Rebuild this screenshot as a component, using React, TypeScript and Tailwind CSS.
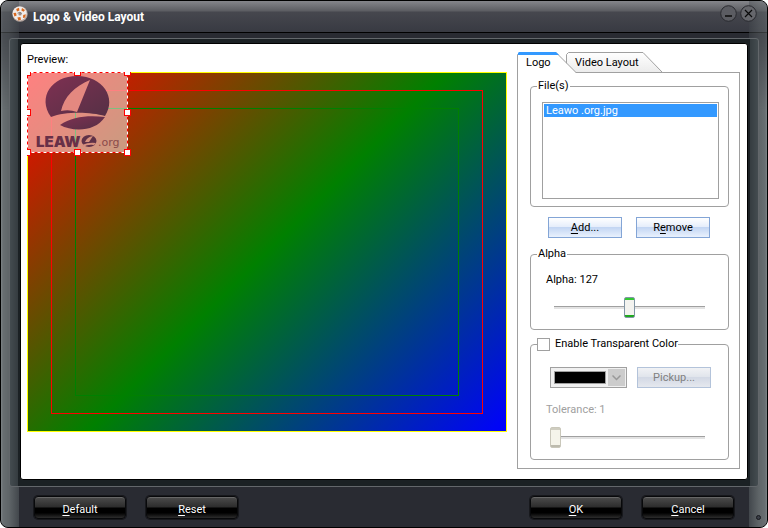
import React from "react";

type GroupProps = {
    legend: React.ReactNode;
    className?: string;
    bodyClassName?: string;
    children: React.ReactNode;
};

const Group = ({
    legend,
    className = "",
    bodyClassName = "",
    children,
}: GroupProps) => (
    <fieldset
        className={`min-w-0 rounded-[4px] border border-[#a0a0a0] ${className}`}
    >
        <legend className="ml-1.5 flex h-4 items-center gap-[5px] leading-[18px]">
            {legend}
        </legend>
        <div className={bodyClassName}>{children}</div>
    </fieldset>
);

type ButtonProps = {
    hotkey: string;
    before?: string;
    after: string;
};

const Label = ({ hotkey, before, after }: ButtonProps) => (
    <span>
        {before}
        <span className="underline underline-offset-2">{hotkey}</span>
        {after}
    </span>
);

const DarkButton = (props: ButtonProps) => (
    <button
        type="button"
        className="h-[23px] w-[92px] rounded-[4px] border border-[#08090b] bg-[linear-gradient(#4c4c4c,#2c2c2c_48%,#000_52%,#000_75%,#2c2c2c)] pt-1 leading-4 text-white shadow-[0_0_0_1px_#17181c,inset_0_1px_0_#666]"
    >
        <Label {...props} />
    </button>
);

const BlueButton = (props: ButtonProps) => (
    <button
        type="button"
        className="h-[21px] w-[74px] border border-[#83a5d6] bg-[linear-gradient(#fff,#e6eefb_45%,#c3d6f3_50%,#e9f1fd)] pt-px leading-4"
    >
        <Label {...props} />
    </button>
);

const AppIcon = () => (
    <svg viewBox="0 0 16 16" className="size-4">
        <circle cx="8" cy="8" r="7.7" fill="#b9a9a2" />
        <circle cx="7.6" cy="7.4" r="7" fill="#f1ece9" />
        <g fill="#d9691e">
            <path d="M4.2 3L7 1.8L7.4 4.4L5 5.6Z" />
            <path d="M10 2L13 4L11.6 5.8L9.4 4.6Z" />
            <path d="M1.4 7L4 6.8L4.6 9.6L2.4 10.6Z" />
            <path d="M5.4 11.6L8.4 11L9 13.8L6.4 14.4Z" />
            <path d="M11.2 9L13.8 8.2L13.2 11.4L11 12Z" />
        </g>
        <circle cx="8" cy="8" r="1.6" fill="#9d8d87" />
        <path d="M5.5 7.2L8 6.2L10 7.6" fill="none" stroke="#6b5f5a" strokeWidth="0.7" />
    </svg>
);

const WatermarkArt = () => (
    <svg viewBox="0 0 100 80" className="absolute inset-0 h-20 w-[100px]">
        <defs>
            <linearGradient id="ink" x1="0" y1="0" x2="1" y2="1">
                <stop offset="0" stopColor="#7f3052" />
                <stop offset="1" stopColor="#553045" />
            </linearGradient>
        </defs>
        <path
            d="M24 45C10 25 25 4 50 4C76 4 90 26 78 44C64 40 39 39 24 45Z"
            fill="url(#ink)"
        />
        <path d="M63 8C48 14 37 25 34 39Q42 37 50 40Z" fill="#e48880" />
        <path d="M33 53C45 44 63 43 78 45C68 60 46 60 33 53Z" fill="url(#ink)" />
        <ellipse cx="62" cy="69" rx="7.5" ry="6" fill="#5f3147" />
        <path
            d="M66 64Q60 65 58 70L62 70ZM55 73Q62 70 69 71L67 73Q61 72 56 75Z"
            fill="#d58f7e"
        />
        <text
            x="9"
            y="75"
            fill="#683048"
            className="font-['Inter',sans-serif] text-[15px] font-black"
        >
            LEAW
        </text>
        <text
            x="71"
            y="74"
            fill="#8a4a4a"
            className="font-['DejaVu_Sans',sans-serif] text-[11px]"
        >
            .org
        </text>
    </svg>
);

const handles = [
    "-left-[3px] -top-[3px]",
    "left-[47px] -top-[3px]",
    "-right-[3px] -top-[3px]",
    "-left-[3px] top-[37px]",
    "-right-[3px] top-[37px]",
    "-left-[3px] -bottom-[3px]",
    "left-[47px] -bottom-[3px]",
    "-right-[3px] -bottom-[3px]",
];

const Preview = () => (
    <div className="relative aspect-[4/3] w-full overflow-hidden bg-[linear-gradient(135deg,#f00,#008000_50%,#00f)]">
        <div className="absolute inset-0 border border-[#ff0]" />
        <div className="absolute inset-[5%] border border-[#f00]" />
        <div className="absolute inset-[10%] border border-[#008000]" />
        <div className="absolute left-0 top-0 h-[81px] w-[101px] bg-white/50">
            <WatermarkArt />
            <svg className="absolute inset-0 size-full">
                <rect x="0.5" y="0.5" width="100" height="80" fill="none" stroke="#fff" />
                <rect
                    x="0.5"
                    y="0.5"
                    width="100"
                    height="80"
                    fill="none"
                    stroke="#f00"
                    strokeDasharray="3 3"
                />
            </svg>
            {handles.map((place) => (
                <span
                    key={place}
                    className={`absolute size-[7px] border border-[#f00] bg-white ${place}`}
                />
            ))}
        </div>
    </div>
);

const Tabs = () => (
    <div role="tablist" className="relative z-10 -mb-px flex h-[21px]">
        <button
            type="button"
            role="tab"
            aria-selected="true"
            className="relative z-10 w-[49px] pl-[9px] text-left leading-4"
        >
            <svg className="absolute left-0 top-0 h-[21px] w-[60px]">
                <path d="M0.5 21V2.5L2.5 0.5H39L59 21Z" fill="#fff" />
                <path d="M0.5 21V2.5L2.5 0.5H39L59 20.5" fill="none" stroke="#a0a0a0" />
                <path d="M1 3V1L2 0H39L42 3Z" fill="#39f" />
            </svg>
            <span className="relative">Logo</span>
        </button>
        <button
            type="button"
            role="tab"
            aria-selected="false"
            className="relative w-[97px] pl-[9px] text-left leading-4"
        >
            <svg className="absolute left-0 top-0 h-[21px] w-[97px]">
                <defs>
                    <linearGradient id="tab" x1="0" y1="0" x2="0" y2="1">
                        <stop offset="0" stopColor="#fff" />
                        <stop offset="1" stopColor="#ebebeb" />
                    </linearGradient>
                </defs>
                <path
                    d="M0.5 21V2.5L2.5 0.5H77L96.5 20.5H0"
                    fill="url(#tab)"
                    stroke="#a0a0a0"
                />
            </svg>
            <span className="relative">Video Layout</span>
        </button>
    </div>
);

const slider =
    "block h-[21px] w-full appearance-none bg-transparent [&::-webkit-slider-runnable-track]:h-[3px] [&::-webkit-slider-runnable-track]:border-t [&::-webkit-slider-runnable-track]:border-[#a0a0a0] [&::-webkit-slider-runnable-track]:bg-[#e3e3e3] [&::-webkit-slider-thumb]:-mt-[10px] [&::-webkit-slider-thumb]:h-[21px] [&::-webkit-slider-thumb]:w-[11px] [&::-webkit-slider-thumb]:appearance-none [&::-webkit-slider-thumb]:rounded-[2px] [&::-webkit-slider-thumb]:border";
const greenThumb =
    "[&::-webkit-slider-thumb]:border-[#8296a5] [&::-webkit-slider-thumb]:bg-[linear-gradient(#32c832_2px,#f3f3ef_2px,#f3f3ef_17px,#1ea81e_17px)]";
const paleThumb =
    "[&::-webkit-slider-thumb]:border-[#c9c7ba] [&::-webkit-slider-thumb]:bg-[linear-gradient(#cfcdc0_2px,#f5f4ea_2px,#f5f4ea_17px,#bdbbae_17px)]";

const LogoPanel = () => (
    <div className="flex flex-col border border-[#a0a0a0] pb-2 pl-3 pr-2.5 pt-[5px]">
        <Group
            legend={<span className="px-px">File(s)</span>}
            bodyClassName="pb-[7px] pl-[11px] pr-[9px] pt-2"
        >
            <select
                size={5}
                aria-label="File(s)"
                defaultValue="Leawo .org.jpg"
                className="block h-[97px] w-full appearance-none overflow-hidden border border-[#a0a0a0] bg-white p-px outline-none"
            >
                <option className="min-h-0 px-0.5 py-0 leading-[13px] checked:bg-[linear-gradient(#39f,#39f)] checked:text-white">
                    Leawo .org.jpg
                </option>
            </select>
        </Group>
        <div className="mt-2.5 flex gap-3.5 px-[18px]">
            <BlueButton hotkey="A" after="dd..." />
            <BlueButton before="R" hotkey="e" after="move" />
        </div>
        <Group
            legend={<span className="px-px">Alpha</span>}
            className="mt-2"
            bodyClassName="px-[15px] pb-[11px] pt-2.5"
        >
            <label htmlFor="alpha" className="block leading-4">
                Alpha: 127
            </label>
            <div className="mt-[9px] px-2">
                <input
                    id="alpha"
                    type="range"
                    min={0}
                    max={255}
                    defaultValue={127}
                    className={`${slider} ${greenThumb}`}
                />
            </div>
        </Group>
        <Group
            className="mt-1.5"
            bodyClassName="px-[15px] pb-[11px] pt-[15px]"
            legend={
                <>
                    <input
                        id="transparent"
                        type="checkbox"
                        className="size-[13px] appearance-none border border-[#a0a0a0] bg-white"
                    />
                    <label htmlFor="transparent">Enable Transparent Color</label>
                </>
            }
        >
            <div className="flex justify-between pl-1 pr-0.5">
                <div className="relative h-[21px] w-[77px]">
                    <select
                        disabled
                        aria-label="Transparent color"
                        className="block size-full appearance-none border border-[#a0a0a0] bg-[#f0f0f0] text-transparent"
                    >
                        <option>Black</option>
                    </select>
                    <span className="pointer-events-none absolute bottom-1 left-1 top-1 w-[52px] border border-[#a0a0a0] bg-black" />
                    <span className="pointer-events-none absolute bottom-0.5 right-0.5 top-0.5 flex w-[17px] items-center justify-center bg-[#ccc]">
                        <svg viewBox="0 0 9 6" className="h-1.5 w-[9px]">
                            <path d="M0.5 0.5L4.5 4.5L8.5 0.5" fill="none" stroke="#999" strokeWidth="1.5" />
                        </svg>
                    </span>
                </div>
                <button
                    type="button"
                    disabled
                    className="h-[21px] w-[74px] border border-[#b3c3da] bg-[linear-gradient(#f1f2f5,#e1e5ec_45%,#d3d9e5_50%,#e5e8ee)] pt-px leading-4 text-[#808080]"
                >
                    Pickup...
                </button>
            </div>
            <label htmlFor="tolerance" className="mt-3.5 block leading-4 text-[#a0a0a0]">
                Tolerance: 1
            </label>
            <div className="mt-[9px] pl-1 pr-2">
                <input
                    id="tolerance"
                    type="range"
                    disabled
                    min={1}
                    max={255}
                    defaultValue={1}
                    className={`${slider} ${paleThumb}`}
                />
            </div>
        </Group>
    </div>
);

const App = () => (
    <div className="relative flex min-h-screen flex-col overflow-hidden rounded-lg border border-black bg-[#292b32] font-['Roboto','Liberation_Sans',sans-serif] text-[11px] text-black">
        <header className="flex h-8 items-center border-b border-black bg-[linear-gradient(#85868b,#5c5d62_10px,#46474e_11px,#383a42)] pl-[11px] pr-2.5">
            <div className="relative z-10 -mt-1.5">
                <AppIcon />
            </div>
            <h1 className="ml-[5px] flex-1 text-[12px] font-bold text-white">
                Logo &amp; Video Layout
            </h1>
            <div className="relative z-10 -mt-1.5 flex gap-[3px]">
                <button type="button" aria-label="Minimize">
                    <svg viewBox="0 0 17 17" className="size-[17px]">
                        <circle cx="8.5" cy="8.5" r="7.8" fill="#5b5c62" stroke="#2a2b30" />
                        <path d="M5 11H12" stroke="#0a0a0a" strokeWidth="1.5" />
                    </svg>
                </button>
                <button type="button" aria-label="Close">
                    <svg viewBox="0 0 17 17" className="size-[17px]">
                        <circle cx="8.5" cy="8.5" r="7.8" fill="#66676c" stroke="#2a2b30" />
                        <path d="M5 5L12 12M12 5L5 12" stroke="#0a0a0a" strokeWidth="1.2" />
                    </svg>
                </button>
            </div>
        </header>
        <div className="pointer-events-none absolute inset-y-0 left-0 w-[18px] bg-[linear-gradient(90deg,#7d8386,#686e71_2px,#5f6568_8px,#42474c)] [mask-image:linear-gradient(#0006,#0008_40px,#000_110px)]" />
        <div className="pointer-events-none absolute inset-y-0 right-0 w-[18px] bg-[linear-gradient(270deg,#7d8386,#686e71_2px,#5f6568_8px,#42474c)] [mask-image:linear-gradient(#0006,#0008_40px,#000_110px)]" />
        <main className="relative mx-2 mt-[5px] rounded-[3px] border border-[#63676b] bg-[linear-gradient(90deg,#444c50,#353c40_8px,#1b2124_8px,#1b2124_calc(100%-8px),#353c40_calc(100%-8px),#444c50)] px-2.5 pb-1.5 pt-1">
            <div className="flex items-start gap-2.5 rounded-[3px] border border-black bg-white pb-2.5 pl-1.5 pr-[7px] pt-2">
                <section className="min-w-0 flex-1">
                    <h2 className="mb-1 leading-4">Preview:</h2>
                    <Preview />
                </section>
                <section className="w-[223px] shrink-0">
                    <Tabs />
                    <LogoPanel />
                </section>
            </div>
        </main>
        <footer className="mt-[9px] flex items-center gap-5 px-[33px] pb-2">
            <DarkButton hotkey="D" after="efault" />
            <DarkButton hotkey="R" after="eset" />
            <span className="flex-1" />
            <DarkButton hotkey="O" after="K" />
            <DarkButton hotkey="C" after="ancel" />
        </footer>
        <span className="absolute bottom-[7px] right-1.5 size-[5px] rounded-full border border-[#15171c] bg-[#3b3f48]" />
    </div>
);

export default App;
